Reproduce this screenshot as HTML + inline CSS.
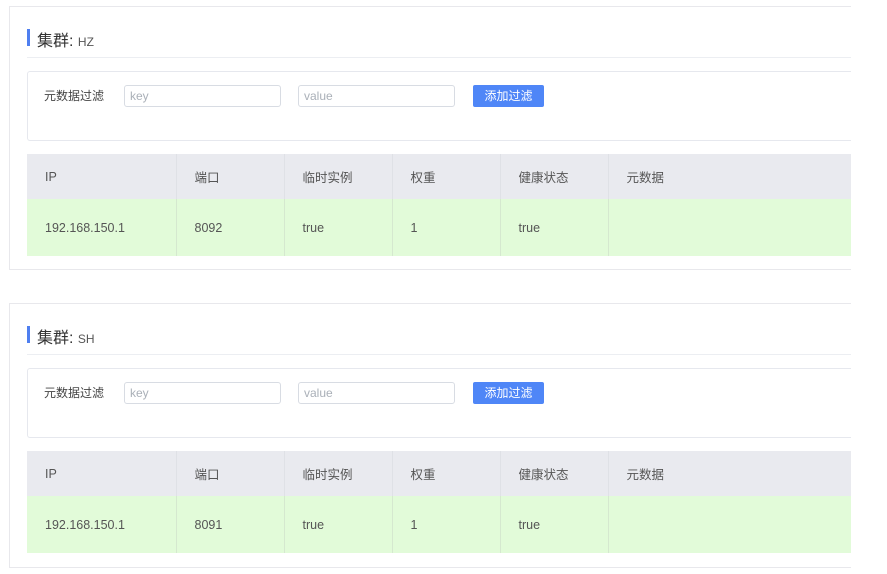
<!DOCTYPE html>
<html><head><meta charset="utf-8"><style>
*{margin:0;padding:0;box-sizing:border-box}
body{width:887px;height:574px;background:#fff;position:relative;overflow:hidden;font-family:"Liberation Sans","Noto Sans CJK SC",sans-serif;color:#555}
.card{position:absolute;left:9px;width:860px;border:1px solid #e8e8ec;border-right:none;background:#fff}
.clip{position:absolute;left:851px;top:0;width:36px;height:574px;background:#fff}
.bar{position:absolute;left:17px;width:3px;height:17px;background:#4f7ff0}
.title{position:absolute;left:27px;font-size:16px;color:#333}
.title small{font-size:12px;color:#555}
.div{position:absolute;left:17px;width:830px;height:1px;background:#eceef2}
.filter{position:absolute;left:17px;width:830px;height:70px;border:1px solid #e6e8ee;border-right:none;border-radius:3px}
.lbl{position:absolute;left:16px;top:15px;font-size:12px;color:#444}
.inp{position:absolute;top:13px;height:22px;width:157px;border:1px solid #d8dce3;border-radius:3px;font-size:12px;color:#aab0b8;padding:0 5px;line-height:20px}
.btn{position:absolute;left:445px;top:13px;width:71px;height:22px;background:#4f86f7;border-radius:2px;color:#fff;font-size:12px;text-align:center;line-height:22px}
table{position:absolute;left:17px;width:834px;border-collapse:collapse;font-size:12.5px;color:#555}
th{background:#e9eaef;height:45px;font-weight:normal;text-align:left;padding-left:18px;border-right:1px solid #dfe1e6}
td{background:#e2fbd9;height:57px;padding-left:18px;border-right:1px solid #d5e8cf}
</style></head><body>

<div class="card" style="top:6px;height:264px">
 <div class="bar" style="top:22px"></div>
 <div class="title" style="top:20px">集群: <small>HZ</small></div>
 <div class="div" style="top:50px"></div>
 <div class="filter" style="top:64px">
  <div class="lbl">元数据过滤</div>
  <div class="inp" style="left:96px">key</div>
  <div class="inp" style="left:270px">value</div>
  <div class="btn">添加过滤</div>
 </div>
 <table style="top:147px">
  <tr><th style="width:149px">IP</th><th style="width:108px">端口</th><th style="width:108px">临时实例</th><th style="width:108px">权重</th><th style="width:108px">健康状态</th><th style="border:none">元数据</th></tr>
  <tr><td>192.168.150.1</td><td>8092</td><td>true</td><td>1</td><td>true</td><td style="border:none"></td></tr>
 </table>
</div>

<div class="card" style="top:303px;height:265px">
 <div class="bar" style="top:22px"></div>
 <div class="title" style="top:20px">集群: <small>SH</small></div>
 <div class="div" style="top:50px"></div>
 <div class="filter" style="top:64px">
  <div class="lbl">元数据过滤</div>
  <div class="inp" style="left:96px">key</div>
  <div class="inp" style="left:270px">value</div>
  <div class="btn">添加过滤</div>
 </div>
 <table style="top:147px">
  <tr><th style="width:149px">IP</th><th style="width:108px">端口</th><th style="width:108px">临时实例</th><th style="width:108px">权重</th><th style="width:108px">健康状态</th><th style="border:none">元数据</th></tr>
  <tr><td>192.168.150.1</td><td>8091</td><td>true</td><td>1</td><td>true</td><td style="border:none"></td></tr>
 </table>
</div>
<div class="clip"></div>
</body></html>
